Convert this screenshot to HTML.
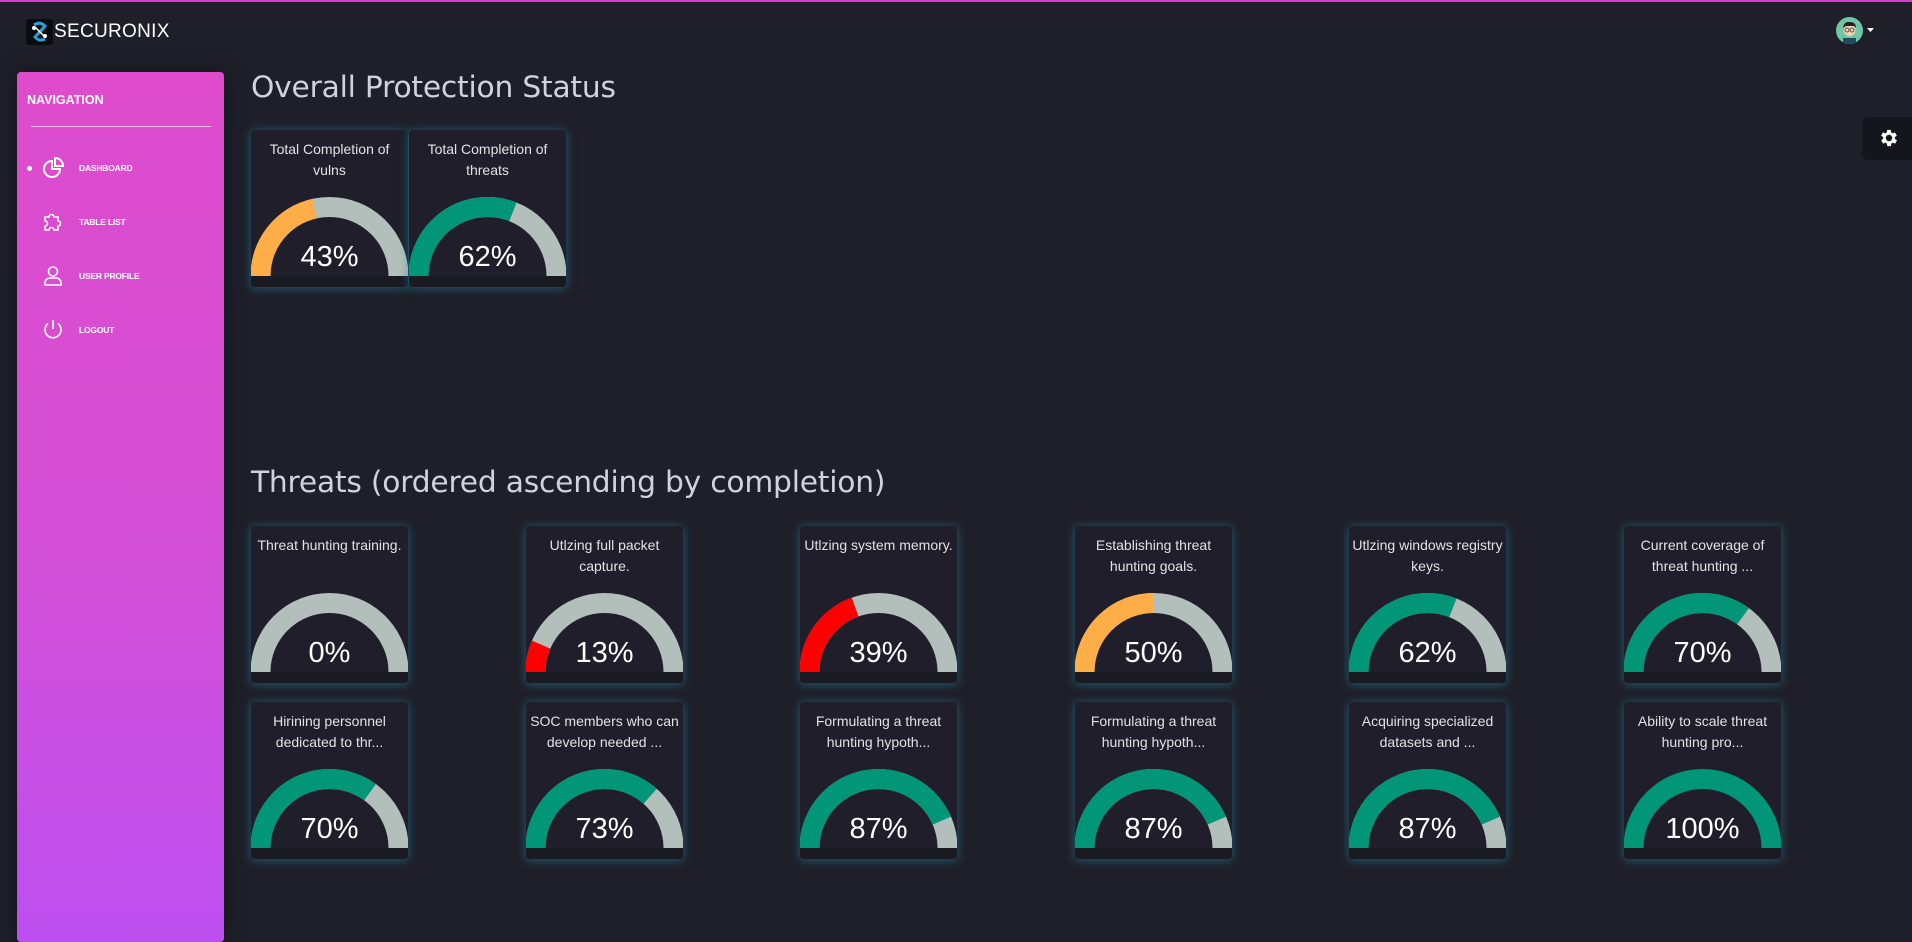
<!DOCTYPE html>
<html><head><meta charset="utf-8"><style>
*{margin:0;padding:0;box-sizing:border-box}
body{width:1912px;height:928px;background:#1f1f29;position:relative;overflow:hidden;font-family:"Liberation Sans",Arial,sans-serif}
.topline{position:absolute;left:0;top:0;width:1912px;height:2px;background:#d63ad0}
.logo{position:absolute;left:26px;top:19px;width:27px;height:26px;background:#0c0c10;border-radius:3px}
.brand{position:absolute;left:54px;top:21px;font-size:19px;color:#fff;letter-spacing:0.3px;line-height:22px}
.side{position:absolute;left:17px;top:72px;width:207px;height:870px;border-radius:4px;background:linear-gradient(180deg,#de4bcc 0%,#d34fd6 55%,#bd4ff0 100%);box-shadow:0 0 20px rgba(0,0,0,.4)}
.nav{position:absolute;left:10px;top:21px;font-size:12.5px;color:#fff;font-weight:bold}
.hr{position:absolute;left:14px;top:54px;width:180px;height:1px;background:rgba(255,255,255,.6)}
.item{position:absolute;left:0;width:207px;height:24px}
.item span{position:absolute;left:62px;top:7px;font-size:8.5px;color:#fff;font-weight:bold;letter-spacing:-0.2px}
.item svg{position:absolute;left:24px;top:0}
.dot{position:absolute;left:10px;top:10px;width:5px;height:5px;border-radius:50%;background:#fff}
h1{position:absolute;font-family:"DejaVu Sans",sans-serif;font-weight:normal;color:#d2d2da;font-size:29.7px;letter-spacing:-0.2px;white-space:nowrap}
.card{position:absolute;width:157px;height:157px;background:#1f1e2a;border-radius:4px;box-shadow:0 1px 9px 1px rgba(30,140,170,.5);overflow:hidden}
.card .t{position:absolute;left:0;top:9px;width:157px;text-align:center;color:#e2e2e6;font-size:14px;line-height:21px}
.card svg{position:absolute;left:0;top:67px}
.card .p{position:absolute;left:0;top:110px;width:157px;text-align:center;color:#fff;font-size:29px;line-height:34px}
.card .b{position:absolute;left:0;top:146px;width:157px;height:11px;background:#1a1a23}
.gear{position:absolute;left:1862px;top:117px;width:50px;height:43px;background:#15151d;border-radius:6px 0 0 6px}
.av{position:absolute;left:1836px;top:17px;width:27px;height:27px;border-radius:50%;background:#6fc7a6;overflow:hidden}
</style></head><body>
<div class="topline"></div>
<div class="logo"><svg width="27" height="26" viewBox="0 0 27 26"><path d="M8 6 Q14 2 19 7 Q14 13 9 18 Q13 23 19 20" fill="none" stroke="#2a9fd6" stroke-width="3"/><path d="M9 8 Q13 12 18 17" fill="none" stroke="#fff" stroke-width="1.5"/><circle cx="8" cy="9" r="2" fill="#fff"/><circle cx="19" cy="17" r="2" fill="#fff"/></svg></div>
<div class="brand">SECURONIX</div>
<div class="av"><svg width="27" height="27"><circle cx="13.5" cy="13" r="6" fill="#f2d3b0"/><path d="M7 11 Q8 4 14 5 Q20 5 20 11 L18 9 L10 9Z" fill="#222"/><circle cx="11" cy="13" r="2" fill="none" stroke="#555"/><circle cx="16" cy="13" r="2" fill="none" stroke="#555"/><rect x="7" y="21" width="13" height="7" fill="#1f4d5c"/></svg></div>
<svg style="position:absolute;left:1867px;top:28px" width="7" height="4"><path d="M0 0H7L3.5 4Z" fill="#fff"/></svg>
<div class="gear"><svg style="position:absolute;left:16px;top:10px" width="22" height="22" viewBox="0 0 24 24"><path fill="#fff" d="M19.4 13a7.5 7.5 0 0 0 0-2l2.1-1.6-2-3.5-2.5 1a7.3 7.3 0 0 0-1.7-1L15 3.2h-4l-.4 2.7a7.3 7.3 0 0 0-1.7 1l-2.5-1-2 3.5L6.6 11a7.5 7.5 0 0 0 0 2l-2.1 1.6 2 3.5 2.5-1a7.3 7.3 0 0 0 1.7 1l.4 2.7h4l.4-2.7a7.3 7.3 0 0 0 1.7-1l2.5 1 2-3.5zM13 15.5a3.5 3.5 0 1 1 0-7 3.5 3.5 0 0 1 0 7z" transform="translate(-1 0)"/></svg></div>

<div class="side">
<div class="nav">NAVIGATION</div>
<div class="hr"></div>
<div class="item" style="top:84px"><div class="dot"></div><svg width="24" height="24" viewBox="0 0 24 24" fill="none" stroke="#fff" stroke-width="2"><path d="M11 5a8 8 0 1 0 8 8h-8z"/><path d="M14 2a8 8 0 0 1 8 8h-8z"/></svg><span>DASHBOARD</span></div>
<div class="item" style="top:138px"><svg width="24" height="24" viewBox="0 0 24 24" fill="none" stroke="#fff" stroke-width="1.6"><path d="M4 7h4a2.5 2.5 0 1 1 5 0h4v4a2.5 2.5 0 1 1 0 5v4h-4a2.5 2.5 0 1 0-5 0H4v-4a2.5 2.5 0 1 0 0-5z"/></svg><span>TABLE LIST</span></div>
<div class="item" style="top:192px"><svg width="24" height="24" viewBox="0 0 24 24" fill="none" stroke="#fff" stroke-width="1.6"><circle cx="12" cy="7.5" r="4.5"/><path d="M4 21v-2a5 5 0 0 1 5-5h6a5 5 0 0 1 5 5v2z"/></svg><span>USER PROFILE</span></div>
<div class="item" style="top:246px"><svg width="24" height="24" viewBox="0 0 24 24" fill="none" stroke="#fff" stroke-width="1.6"><path d="M12 2v9"/><path d="M7 5.5a8 8 0 1 0 10 0"/></svg><span>LOGOUT</span></div>
</div>

<h1 style="left:251px;top:70px">Overall Protection Status</h1>
<h1 style="left:251px;top:465px">Threats (ordered ascending by completion)</h1>

<div class="card" style="left:251px;top:130px"><div class="t">Total Completion of<br>vulns</div><svg width="157" height="79"><path d="M9.5 79A69 69 0 0 1 147.5 79" fill="none" stroke="#b3bfbb" stroke-width="20"/><path d="M9.5 79A69 69 0 0 1 63.45 11.66" fill="none" stroke="#ffad46" stroke-width="20"/></svg><div class="p">43%</div><div class="b"></div></div>
<div class="card" style="left:409px;top:130px"><div class="t">Total Completion of<br>threats</div><svg width="157" height="79"><path d="M9.5 79A69 69 0 0 1 147.5 79" fill="none" stroke="#b3bfbb" stroke-width="20"/><path d="M9.5 79A69 69 0 0 1 103.9 14.84" fill="none" stroke="#009677" stroke-width="20"/></svg><div class="p">62%</div><div class="b"></div></div>

<div class="card" style="left:251px;top:526px"><div class="t">Threat hunting training.</div><svg width="157" height="79"><path d="M9.5 79A69 69 0 0 1 147.5 79" fill="none" stroke="#b3bfbb" stroke-width="20"/></svg><div class="p">0%</div><div class="b"></div></div>
<div class="card" style="left:526px;top:526px"><div class="t">Utlzing full packet<br>capture.</div><svg width="157" height="79"><path d="M9.5 79A69 69 0 0 1 147.5 79" fill="none" stroke="#b3bfbb" stroke-width="20"/><path d="M9.5 79A69 69 0 0 1 15.17 51.6" fill="none" stroke="#ff0000" stroke-width="20"/></svg><div class="p">13%</div><div class="b"></div></div>
<div class="card" style="left:800px;top:526px"><div class="t">Utlzing system memory.</div><svg width="157" height="79"><path d="M9.5 79A69 69 0 0 1 147.5 79" fill="none" stroke="#b3bfbb" stroke-width="20"/><path d="M9.5 79A69 69 0 0 1 55.13 14.08" fill="none" stroke="#ff0000" stroke-width="20"/></svg><div class="p">39%</div><div class="b"></div></div>
<div class="card" style="left:1075px;top:526px"><div class="t">Establishing threat<br>hunting goals.</div><svg width="157" height="79"><path d="M9.5 79A69 69 0 0 1 147.5 79" fill="none" stroke="#b3bfbb" stroke-width="20"/><path d="M9.5 79A69 69 0 0 1 78.5 10" fill="none" stroke="#ffad46" stroke-width="20"/></svg><div class="p">50%</div><div class="b"></div></div>
<div class="card" style="left:1349px;top:526px"><div class="t">Utlzing windows registry<br>keys.</div><svg width="157" height="79"><path d="M9.5 79A69 69 0 0 1 147.5 79" fill="none" stroke="#b3bfbb" stroke-width="20"/><path d="M9.5 79A69 69 0 0 1 103.9 14.84" fill="none" stroke="#009677" stroke-width="20"/></svg><div class="p">62%</div><div class="b"></div></div>
<div class="card" style="left:1624px;top:526px"><div class="t">Current coverage of<br>threat hunting ...</div><svg width="157" height="79"><path d="M9.5 79A69 69 0 0 1 147.5 79" fill="none" stroke="#b3bfbb" stroke-width="20"/><path d="M9.5 79A69 69 0 0 1 119.06 23.18" fill="none" stroke="#009677" stroke-width="20"/></svg><div class="p">70%</div><div class="b"></div></div>

<div class="card" style="left:251px;top:702px"><div class="t">Hirining personnel<br>dedicated to thr...</div><svg width="157" height="79"><path d="M9.5 79A69 69 0 0 1 147.5 79" fill="none" stroke="#b3bfbb" stroke-width="20"/><path d="M9.5 79A69 69 0 0 1 119.06 23.18" fill="none" stroke="#009677" stroke-width="20"/></svg><div class="p">70%</div><div class="b"></div></div>
<div class="card" style="left:526px;top:702px"><div class="t">SOC members who can<br>develop needed ...</div><svg width="157" height="79"><path d="M9.5 79A69 69 0 0 1 147.5 79" fill="none" stroke="#b3bfbb" stroke-width="20"/><path d="M9.5 79A69 69 0 0 1 124.13 27.24" fill="none" stroke="#009677" stroke-width="20"/></svg><div class="p">73%</div><div class="b"></div></div>
<div class="card" style="left:800px;top:702px"><div class="t">Formulating a threat<br>hunting hypoth...</div><svg width="157" height="79"><path d="M9.5 79A69 69 0 0 1 147.5 79" fill="none" stroke="#b3bfbb" stroke-width="20"/><path d="M9.5 79A69 69 0 0 1 141.83 51.6" fill="none" stroke="#009677" stroke-width="20"/></svg><div class="p">87%</div><div class="b"></div></div>
<div class="card" style="left:1075px;top:702px"><div class="t">Formulating a threat<br>hunting hypoth...</div><svg width="157" height="79"><path d="M9.5 79A69 69 0 0 1 147.5 79" fill="none" stroke="#b3bfbb" stroke-width="20"/><path d="M9.5 79A69 69 0 0 1 141.83 51.6" fill="none" stroke="#009677" stroke-width="20"/></svg><div class="p">87%</div><div class="b"></div></div>
<div class="card" style="left:1349px;top:702px"><div class="t">Acquiring specialized<br>datasets and ...</div><svg width="157" height="79"><path d="M9.5 79A69 69 0 0 1 147.5 79" fill="none" stroke="#b3bfbb" stroke-width="20"/><path d="M9.5 79A69 69 0 0 1 141.83 51.6" fill="none" stroke="#009677" stroke-width="20"/></svg><div class="p">87%</div><div class="b"></div></div>
<div class="card" style="left:1624px;top:702px"><div class="t">Ability to scale threat<br>hunting pro...</div><svg width="157" height="79"><path d="M9.5 79A69 69 0 0 1 147.5 79" fill="none" stroke="#009677" stroke-width="20"/></svg><div class="p">100%</div><div class="b"></div></div>
</body></html>
